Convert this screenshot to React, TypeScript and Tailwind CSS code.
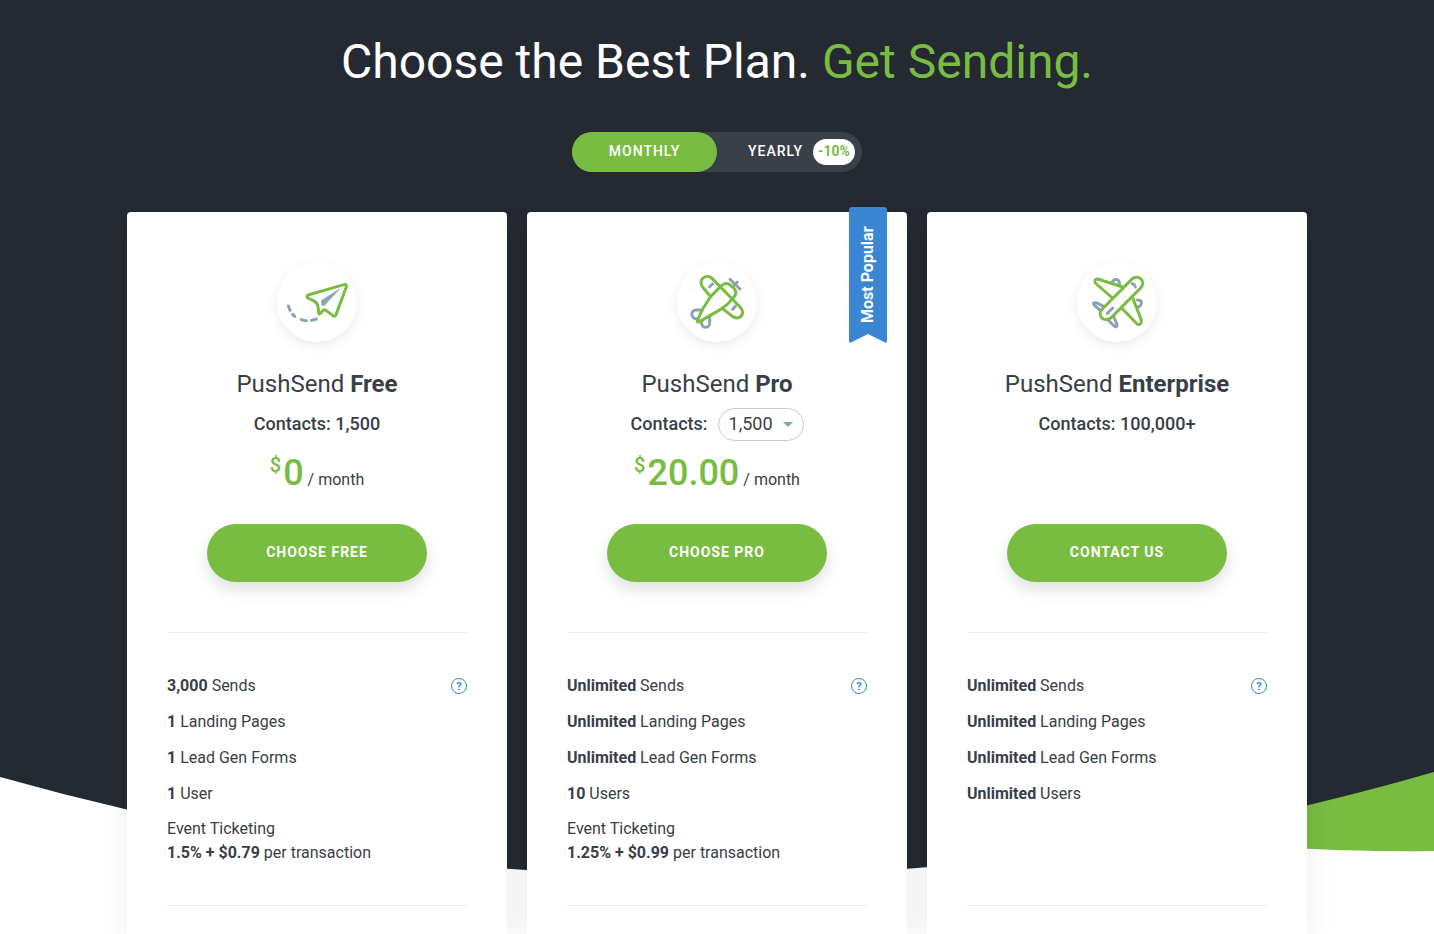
import React, { useState } from 'react';

type Feature = {
  amount: string;
  label: string;
  help?: boolean;
};

type Plan = {
  name: string;
  icon: React.FC;
  contacts: string;
  contactOptions?: string[];
  price?: string;
  action: string;
  popular?: boolean;
  features: Feature[];
  ticketing?: string;
};

const PaperPlaneIcon = () => (
  <svg viewBox="30 30 240 240" className="size-20" fill="none" strokeLinecap="round" strokeLinejoin="round" aria-hidden="true">
    <path d="M64 162l5 13M77 187l6 6M103 203q7 3 15 3M133 205l15-4" stroke="#8da1b5" strokeWidth="9" />
    <path d="M216 112L163 146L165 160L172 160Z" fill="#8da1b5" stroke="#8da1b5" strokeWidth="2" />
    <path
      d="M123 129L231 98Q240 95 238 104L207 188Q204 196 197 190L178 176Q172 171 168 176L160 184Q155 189 155 181L153 164Q152 153 143 148L123 138Q117 133 123 129Z"
      stroke="#78bc42"
      strokeWidth="9"
    />
  </svg>
);

const PropellerPlaneIcon = () => (
  <svg viewBox="30 30 240 240" className="size-20" fill="none" strokeLinecap="round" strokeLinejoin="round" aria-hidden="true">
    <g stroke="#8da1b5" strokeWidth="9">
      <path d="M103 174H88C70 174 70 199 88 200H94M128 196V213C127 230 105 230 104 214V208" />
      <path d="M189 82L219 111M211 90L199 102" />
      <path d="M128 104L137 96M197 172L205 163" />
    </g>
    <g stroke="#78bc42" strokeWidth="9">
      <path d="M131 134L106 104C92 82 118 64 135 79L222 168C236 190 214 206 195 192L166 169" />
      <path d="M91 204Q108 165 131 134L162 102Q175 90 187 97L202 110Q210 120 204 131L195 142Q182 158 166 169L98 209Q89 213 91 204Z" />
    </g>
  </svg>
);

const JetIcon = () => (
  <svg viewBox="30 30 240 240" className="size-20" fill="none" strokeLinecap="round" strokeLinejoin="round" aria-hidden="true">
    <g stroke="#8da1b5" strokeWidth="9">
      <path d="M136 90C143 77 159 82 157 97M211 144C226 144 229 158 211 167" />
      <path d="M110 163L87 152Q75 151 82 160L101 176M122 203L143 223Q151 228 150 217L139 191" />
      <path d="M121 184L137 168M195 95Q203 97 205 105" />
    </g>
    <g stroke="#78bc42" strokeWidth="9">
      <path d="M168 105L92 81Q80 82 85 93L136 138M198 140L223 204Q224 220 211 217L163 167" />
      <path d="M106 171L194 82C214 64 240 88 220 109L133 197C111 214 88 190 106 171Z" />
    </g>
  </svg>
);

const plans: Plan[] = [
  {
    name: 'Free',
    icon: PaperPlaneIcon,
    contacts: '1,500',
    price: '0',
    action: 'Choose Free',
    features: [
      { amount: '3,000', label: 'Sends', help: true },
      { amount: '1', label: 'Landing Pages' },
      { amount: '1', label: 'Lead Gen Forms' },
      { amount: '1', label: 'User' },
    ],
    ticketing: '1.5% + $0.79',
  },
  {
    name: 'Pro',
    icon: PropellerPlaneIcon,
    contacts: '1,500',
    contactOptions: ['1,500', '2,500', '5,000'],
    price: '20.00',
    action: 'Choose Pro',
    popular: true,
    features: [
      { amount: 'Unlimited', label: 'Sends', help: true },
      { amount: 'Unlimited', label: 'Landing Pages' },
      { amount: 'Unlimited', label: 'Lead Gen Forms' },
      { amount: '10', label: 'Users' },
    ],
    ticketing: '1.25% + $0.99',
  },
  {
    name: 'Enterprise',
    icon: JetIcon,
    contacts: '100,000+',
    action: 'Contact Us',
    features: [
      { amount: 'Unlimited', label: 'Sends', help: true },
      { amount: 'Unlimited', label: 'Landing Pages' },
      { amount: 'Unlimited', label: 'Lead Gen Forms' },
      { amount: 'Unlimited', label: 'Users' },
    ],
  },
];

const Backdrop = () => (
  <div className="absolute inset-x-0 top-0" aria-hidden="true">
    <div className="h-[740px] bg-[#252a32]" />
    <svg viewBox="0 0 1434 160" preserveAspectRatio="none" className="block h-40 w-full">
      <path d="M1434 0V111Q1310 113 1120 96V0Z" fill="#78bc42" />
      <path d="M0 0V37Q717 239 1434 32V0Z" fill="#252a32" />
    </svg>
  </div>
);

const PopularRibbon = () => (
  <div className="absolute -top-[5px] right-5 h-34 w-[38px]">
    <svg viewBox="0 0 38 136" className="absolute inset-0 size-full" aria-hidden="true">
      <path d="M3 0H35Q38 0 38 3V134Q38 137 35 135L19 127L3 135Q0 137 0 134V3Q0 0 3 0Z" fill="#3b86d3" />
    </svg>
    <span className="relative flex h-full w-full rotate-180 items-center justify-center font-bold leading-6 text-white [writing-mode:vertical-rl]">
      Most Popular
    </span>
  </div>
);

const PlanCard = ({ plan }: { plan: Plan }) => {
  const Icon = plan.icon;

  return (
    <article className="relative flex flex-col rounded-t bg-white px-10 pt-[50px] pb-7 shadow-[0_10px_30px_rgba(0,0,0,0.08)]">
      {plan.popular && <PopularRibbon />}

      {/* Summary */}
      <div className="flex flex-col items-center border-b border-[#e9ecf0] pb-[50px]">
        <div className="rounded-full bg-white shadow-[0_4px_12px_rgba(0,0,0,0.08)]">
          <Icon />
        </div>
        <h2 className="mt-6 text-2xl leading-9">
          PushSend <strong className="font-bold">{plan.name}</strong>
        </h2>
        <div className="mt-0.5 flex h-10 items-center text-lg font-medium">
          {plan.contactOptions ? (
            <>
              <label htmlFor="pro-contacts">Contacts:</label>
              <div className="relative ml-2.5">
                <select
                  id="pro-contacts"
                  defaultValue={plan.contacts}
                  className="block h-[33px] w-[86px] appearance-none rounded-full border border-[#c3ced9] bg-white pl-2.5 text-lg leading-6 font-normal"
                >
                  {plan.contactOptions.map((option) => (
                    <option key={option}>{option}</option>
                  ))}
                </select>
                <svg viewBox="0 0 10 5" className="pointer-events-none absolute top-3.5 right-[11px] h-[5px] w-2.5" aria-hidden="true">
                  <path d="M0 0H10L5 5Z" fill="#8da1b5" />
                </svg>
              </div>
            </>
          ) : (
            <p>Contacts: {plan.contacts}</p>
          )}
        </div>
        <div className="mb-7 flex h-[52px] items-baseline">
          {plan.price && (
            <p className="flex items-baseline leading-[52px]">
              <span className="mr-0.5 self-start text-xl leading-[42px] font-medium text-[#78bc42]">$</span>
              <span className="text-4xl leading-[58px] font-medium text-[#78bc42]">{plan.price}</span>
              <span className="ml-1">/ month</span>
            </p>
          )}
        </div>
        <button
          type="button"
          className="h-[58px] w-[220px] rounded-full bg-[#78bc42] pb-0.5 text-sm font-bold tracking-[1px] text-white uppercase shadow-[0_8px_16px_rgba(0,0,0,0.12)]"
        >
          {plan.action}
        </button>
      </div>

      {/* Feature list */}
      <div className="min-h-[273px] border-b border-[#e9e9e9] pt-[41px]">
        <ul>
          {plan.features.map(({ amount, label, help }) => (
            <li key={label} className="flex h-9 items-start justify-between leading-6">
              <span>
                <strong className="font-bold">{amount}</strong> {label}
              </span>
              {help && (
                <button
                  type="button"
                  aria-label={`About ${label}`}
                  className="mt-1 flex size-4 items-center justify-center rounded-full border border-[#2f8fe3] text-[11px] leading-none font-bold text-[#2f8fe3]"
                >
                  ?
                </button>
              )}
            </li>
          ))}
        </ul>
        {plan.ticketing && (
          <p className="-mt-px leading-6">
            Event Ticketing
            <br />
            <strong className="font-bold">{plan.ticketing}</strong> per transaction
          </p>
        )}
      </div>
    </article>
  );
};

const App = () => {
  const [yearly, setYearly] = useState(false);

  return (
    <main className="relative flex min-h-screen flex-col overflow-hidden bg-white font-['Roboto',sans-serif] text-base text-[#384047]">
      <Backdrop />

      <div className="relative mx-auto flex w-full max-w-[1180px] flex-1 flex-col">
        <h1 className="pt-8 text-center text-5xl leading-[60px] text-white">
          Choose the Best Plan. <span className="text-[#78bc42]">Get Sending.</span>
        </h1>

        {/* Billing period */}
        <div className="mx-auto mt-10 flex h-10 w-[290px] rounded-full bg-[#394048] text-sm font-medium tracking-[1px] text-white uppercase">
          <button
            type="button"
            aria-pressed={!yearly}
            onClick={() => setYearly(false)}
            className={`w-1/2 rounded-full pb-0.5 uppercase ${yearly ? '' : 'bg-[#78bc42]'}`}
          >
            Monthly
          </button>
          <button
            type="button"
            aria-pressed={yearly}
            onClick={() => setYearly(true)}
            className={`flex w-1/2 items-center justify-end gap-2.5 rounded-full pr-[7px] uppercase ${yearly ? 'bg-[#78bc42]' : ''}`}
          >
            <span className="pb-0.5">Yearly</span>
            <span className="flex h-[26px] w-[42px] items-center justify-center rounded-full bg-white pb-0.5 font-bold tracking-normal text-[#78bc42]">
              -10%
            </span>
          </button>
        </div>

        {/* Plans */}
        <div className="mt-10 grid flex-1 grid-cols-3 gap-5">
          {plans.map((plan) => (
            <PlanCard key={plan.name} plan={plan} />
          ))}
        </div>
      </div>
    </main>
  );
};

export default App;
